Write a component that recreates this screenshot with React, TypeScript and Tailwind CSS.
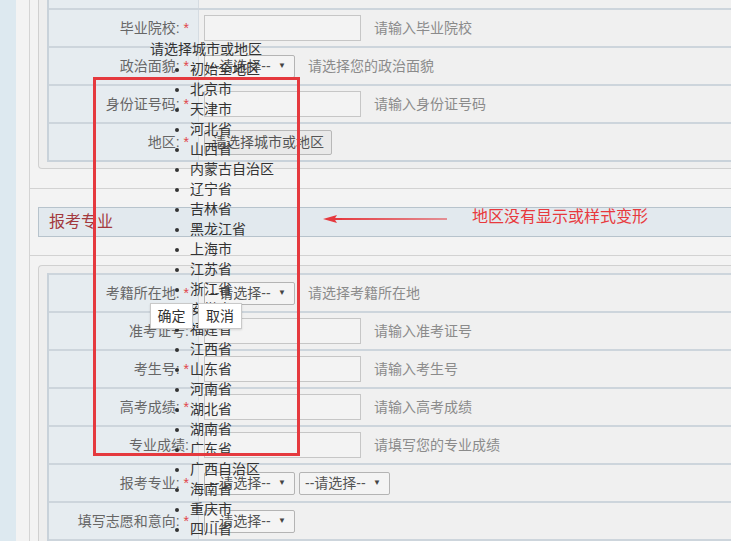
import type { ReactNode } from "react";

const FONT = "font-['Liberation_Sans','Noto_Sans_CJK_SC',sans-serif]";

const REGIONS = [
  "初始全地区",
  "北京市",
  "天津市",
  "河北省",
  "山西省",
  "内蒙古自治区",
  "辽宁省",
  "吉林省",
  "黑龙江省",
  "上海市",
  "江苏省",
  "浙江省",
  "安徽省",
  "福建省",
  "江西省",
  "山东省",
  "河南省",
  "湖北省",
  "湖南省",
  "广东省",
  "广西自治区",
  "海南省",
  "重庆市",
  "四川省",
  "贵州省",
  "云南省",
  "西藏自治区",
];

function Row({
  label,
  required,
  children,
}: {
  label: string;
  required?: boolean;
  children?: ReactNode;
}) {
  return (
    <div className="flex h-[38px] border-t-2 border-[#cdd5dc]">
      <div className="flex w-[150px] shrink-0 items-center justify-end border-r border-[#d5dce2] bg-[#e6ecf0] pr-[9px] text-[14px] leading-[20px] text-[#666]">
        {label}:
        {required && <span className="ml-[4px] text-[#e0454b]">*</span>}
      </div>
      <div className="flex flex-1 items-center bg-[#f0f0f0] pl-[5px]">
        {children}
      </div>
    </div>
  );
}

function TextInput() {
  return (
    <div className="h-[26px] w-[157px] shrink-0 border border-[#c6c6c6] bg-[#f3f3f3]" />
  );
}

function Select({ className = "" }: { className?: string }) {
  return (
    <div
      className={`flex h-[23px] w-[91px] shrink-0 items-center rounded-[2px] border border-[#b4b4b4] bg-[#f4f4f4] pl-[5px] pr-[8px] text-[14px] leading-[20px] text-[#555] ${className}`}
    >
      <span>--请选择--</span>
      <span className="ml-auto text-[8px] text-[#444]">▼</span>
    </div>
  );
}

function Hint({ children, gap = "ml-[13px]" }: { children: ReactNode; gap?: string }) {
  return (
    <span className={`${gap} text-[14px] leading-[20px] text-[#8b8b8b]`}>
      {children}
    </span>
  );
}

export default function App() {
  return (
    <div
      className={`relative h-screen overflow-hidden bg-[#dde9f0] pl-4 ${FONT}`}
    >
      <div className="h-full w-[1000px] bg-[#f3f3f3] pl-[13px]">
        <div className="h-full border-l border-[#d4d4d4]">
          {/* 基本信息 */}
          <div className="border-b border-[#d2d2d2] pb-[19px] pl-[8px]">
            <div className="rounded-bl-[4px] border-b border-l border-[#d0d0d0] bg-[#eeeeee] pb-[6px] pl-[8px]">
              <div className="border-b-2 border-l-2 border-[#c9d2da]">
                <div className="flex h-[8px]">
                  <div className="w-[150px] border-r border-[#d5dce2] bg-[#e6ecf0]" />
                  <div className="flex-1 bg-[#f0f0f0]" />
                </div>
                <Row label="毕业院校" required>
                  <TextInput />
                  <Hint>请输入毕业院校</Hint>
                </Row>
                <Row label="政治面貌" required>
                  <Select />
                  <Hint>请选择您的政治面貌</Hint>
                </Row>
                <Row label="身份证号码" required>
                  <TextInput />
                  <Hint>请输入身份证号码</Hint>
                </Row>
                <Row label="地区" required>
                  <button className="h-[25px] rounded-[2px] border border-[#b8b8b8] bg-[#e9e9e9] px-[7px] text-[14px] leading-[20px] text-[#555]">
                    请选择城市或地区
                  </button>
                </Row>
              </div>
            </div>
          </div>

          {/* 报考专业 标题 */}
          <div className="border-b border-[#d2d2d2] py-[18px] pl-[8px]">
            <div className="flex h-[30px] items-center border border-[#b7c3cc] bg-[#e2e9ee] pl-[10px] text-[16px] leading-[20px] text-[#a3393d]">
              报考专业
            </div>
          </div>

          {/* 报考信息 */}
          <div className="pl-[8px] pt-[9px]">
            <div className="rounded-tl-[4px] border-l border-t border-[#d0d0d0] bg-[#eeeeee] pl-[8px] pt-[7px]">
              <div className="border-l-2 border-[#c9d2da]">
                <Row label="考籍所在地" required>
                  <Select />
                  <Hint>请选择考籍所在地</Hint>
                </Row>
                <Row label="准考证号">
                  <TextInput />
                  <Hint>请输入准考证号</Hint>
                </Row>
                <Row label="考生号" required>
                  <TextInput />
                  <Hint>请输入考生号</Hint>
                </Row>
                <Row label="高考成绩" required>
                  <TextInput />
                  <Hint>请输入高考成绩</Hint>
                </Row>
                <Row label="专业成绩">
                  <TextInput />
                  <Hint>请填写您的专业成绩</Hint>
                </Row>
                <Row label="报考专业" required>
                  <Select />
                  <Select className="ml-[4px]" />
                </Row>
                <Row label="填写志愿和意向" required>
                  <Select />
                </Row>
                <Row label="备注" />
              </div>
            </div>
          </div>
        </div>
      </div>

      {/* 城市选择弹层（样式未加载，退化成普通列表） */}
      <div className="absolute left-[150px] top-[39px] text-[14px] leading-[20px] text-[#333]">
        <div className="h-[20px]">请选择城市或地区</div>
        <ul className="list-disc pl-10">
          {REGIONS.map((r) => (
            <li key={r}>{r}</li>
          ))}
        </ul>
        <button className="absolute left-0 top-[264px] h-[26px] w-[43px] border border-[#c9c9c9] bg-white text-[14px] leading-[20px] text-[#333] shadow-[0_1px_2px_rgba(0,0,0,0.12)]">
          确定
        </button>
        <button className="absolute left-[48px] top-[264px] h-[26px] w-[44px] border border-[#c9c9c9] bg-white text-[14px] leading-[20px] text-[#333] shadow-[0_1px_2px_rgba(0,0,0,0.12)]">
          取消
        </button>
      </div>

      {/* 标注 */}
      <div className="absolute left-[93px] top-[77px] h-[379px] w-[207px] border-[3px] border-[#e5393e]" />
      <svg
        className="absolute left-[322px] top-[213px]"
        width="126"
        height="12"
        viewBox="0 0 126 12"
      >
        <polygon points="1,6 15,2 12.5,6 15,10" fill="#e5393e" />
        <polygon points="12,5 125,5.5 125,6.5 12,7" fill="#e5393e" />
      </svg>
      <div className="absolute left-[472px] top-[207px] text-[16px] leading-[20px] text-[#e8393d]">
        地区没有显示或样式变形
      </div>
    </div>
  );
}
